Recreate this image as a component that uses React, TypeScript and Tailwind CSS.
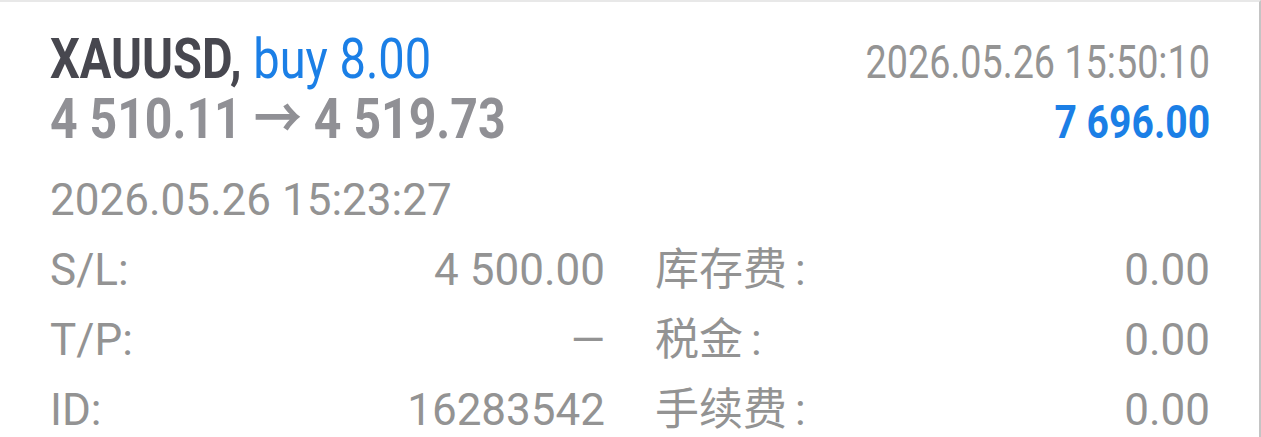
const rows = [
  { label: "S/L:", value: "4 500.00", label2: "库存费", value2: "0.00" },
  { label: "T/P:", value: "—", label2: "税金", value2: "0.00" },
  { label: "ID:", value: "16283542", label2: "手续费", value2: "0.00" },
];

export default function App() {
  return (
    <div
      className="h-[437px] w-full overflow-hidden border-t-2 border-r-2 border-t-[#e8e8e8] border-r-[#c4c4c4] bg-white pl-[50px] pr-[49px] pt-[27px]"
      style={{ fontFamily: 'Roboto, "Noto Sans CJK SC", sans-serif' }}
    >
      {/* header: symbol + close time */}
      <div className="flex h-[60px] items-baseline justify-between text-[56px] leading-[60px]">
        <span className="inline-block origin-left scale-x-[0.84] whitespace-nowrap">
          <span className="font-bold text-[#47474f]">XAUUSD,</span>{" "}
          <span className="text-[#1b7fe6]">buy 8.00</span>
        </span>
        <span className="inline-block origin-right scale-x-[0.82] whitespace-nowrap text-[46px] text-[#949494]">
          2026.05.26 15:50:10
        </span>
      </div>

      <div className="flex h-[60px] items-baseline justify-between text-[56px] leading-[60px]">
        <span className="inline-block origin-left scale-x-[0.86] whitespace-nowrap font-bold text-[#909095]">
          4 510.11 → 4 519.73
        </span>
        <span className="inline-block origin-right scale-x-[0.85] whitespace-nowrap text-[46px] font-bold text-[#1b7fe6]">
          7 696.00
        </span>
      </div>

      <div className="mt-[16px] text-[44px] leading-[70px] text-[#939393]">
        2026.05.26 15:23:27
      </div>

      <div className="text-[44px] leading-[70px] text-[#939393]">
        {rows.map((r) => (
          <div key={r.label} className="grid grid-cols-[1fr_605px] whitespace-nowrap">
            <div className="flex justify-between">
              <span>{r.label}</span>
              <span>{r.value}</span>
            </div>
            <div className="flex justify-between pl-[50px]">
              <span>
                {r.label2}
                <span className="ml-[8px]">:</span>
              </span>
              <span>{r.value2}</span>
            </div>
          </div>
        ))}
      </div>
    </div>
  );
}
